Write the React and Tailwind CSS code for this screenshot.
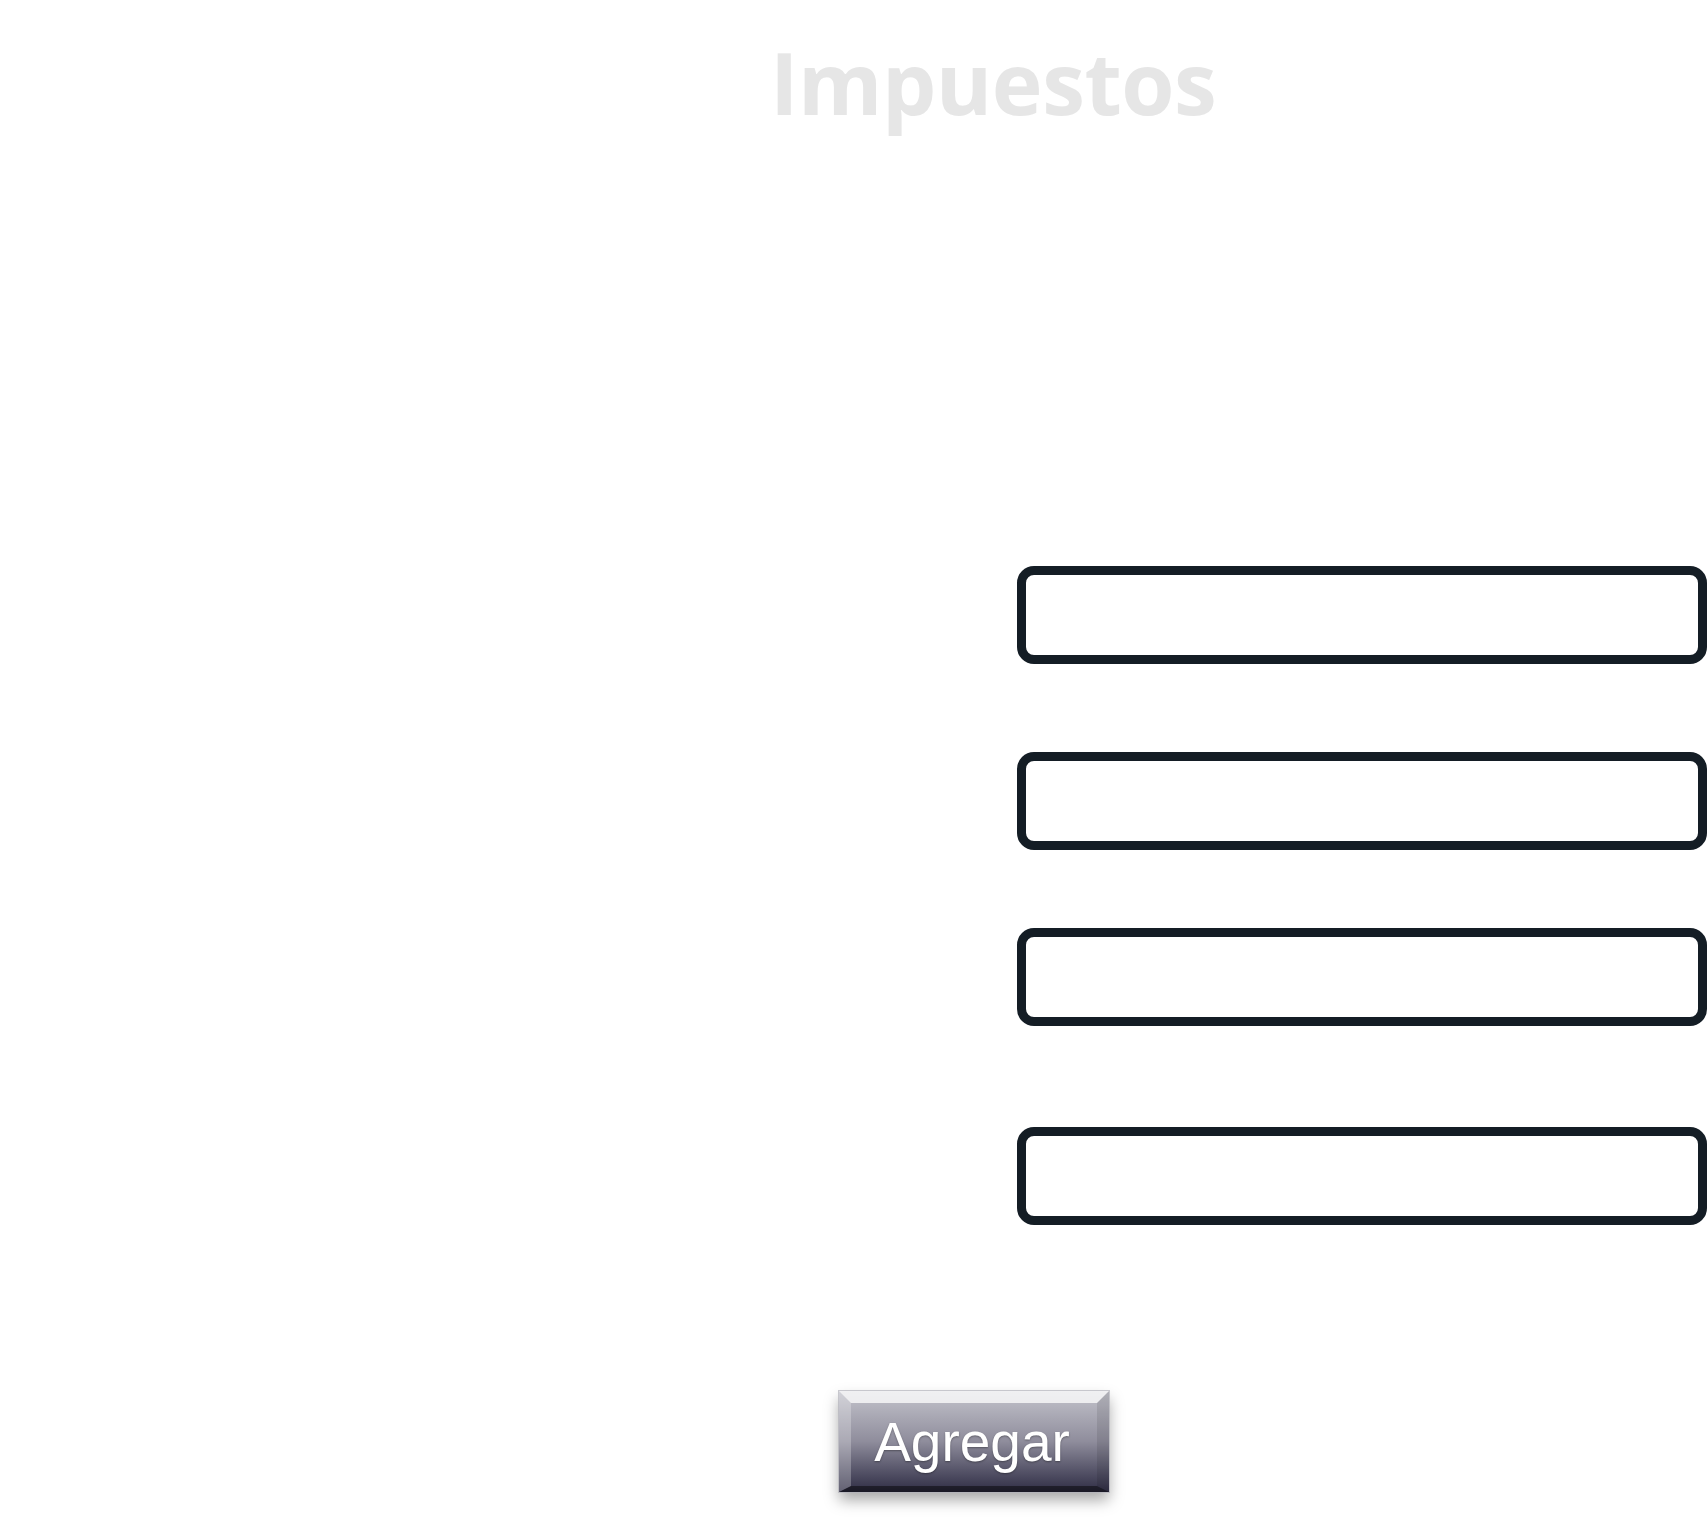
import React, { useState } from 'react';

const fields = [
  { name: 'nombre', label: 'Nombre', gap: 'mt-[441px]' },
  { name: 'porcentaje', label: 'Porcentaje', gap: 'mt-[88px]' },
  { name: 'descripcion', label: 'Descripción', gap: 'mt-[78px]' },
  { name: 'codigo', label: 'Código', gap: 'mt-[101px]' },
];

const App = () => {
  const [form, setForm] = useState({ nombre: '', porcentaje: '', descripcion: '', codigo: '' });

  const onChange = (e) => setForm({ ...form, [e.target.name]: e.target.value });

  return (
    <div className="min-h-screen bg-white font-['Open_Sans',sans-serif] overflow-hidden">
      <h1 className="pt-[39px] pl-[770px] text-[86px] leading-none font-bold tracking-[-0.5px] text-[#e6e6e6]">
        Impuestos
      </h1>

      <form onSubmit={(e) => e.preventDefault()}>
        {fields.map((f) => (
          <div key={f.name} className={`${f.gap} flex items-center`}>
            <label
              htmlFor={f.name}
              className="w-[1017px] pl-[93px] text-[36px] text-white font-['Liberation_Sans',sans-serif]"
            >
              {f.label}
            </label>
            <input
              id={f.name}
              name={f.name}
              value={form[f.name]}
              onChange={onChange}
              className="w-[690px] h-[98px] border-[9px] border-[#141d25] rounded-[17px] bg-white px-4 text-2xl outline-none"
            />
          </div>
        ))}

        <div className="mt-[166px] pl-[839px] pb-10">
          <button
            type="submit"
            className="w-[270px] h-[101px] flex items-center justify-center pr-1 border-t-[12px] border-x-[12px] border-b-[6px] border-t-white/75 border-l-white/25 border-r-black/10 border-b-black/45 bg-origin-border bg-gradient-to-b from-[#c4c4cc] via-[#8f8d9c] to-[#302e45] outline outline-1 outline-[#b4b4bc]/70 shadow-[0_8px_14px_rgba(0,0,0,0.35)] text-white text-[55px] leading-none font-['Liberation_Sans',sans-serif] [text-shadow:0_1px_2px_rgba(0,0,0,0.35)]"
          >
            <span className="-mt-[5px]">Agregar</span>
          </button>
        </div>
      </form>
    </div>
  );
};

export default App;
